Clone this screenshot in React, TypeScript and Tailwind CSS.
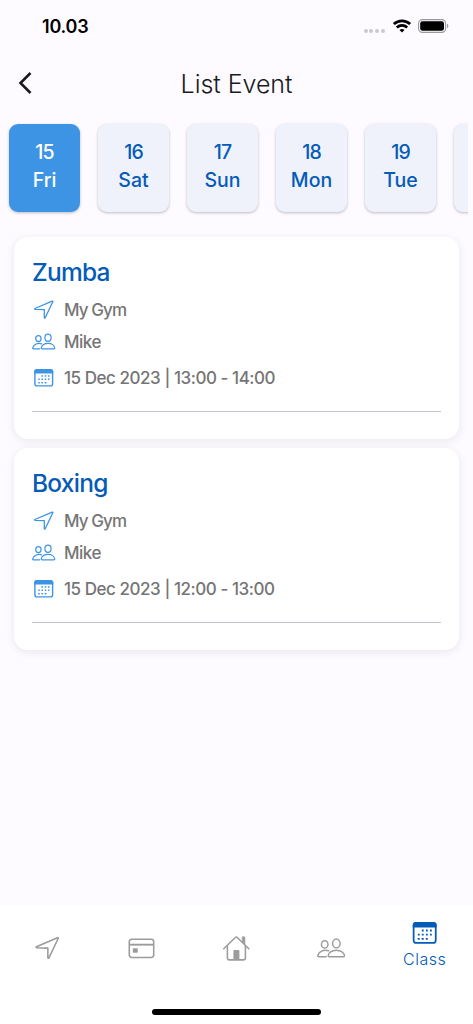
import type { ReactNode } from "react";

type IconProps = { className?: string };

const DAYS = [
  { date: "15", day: "Fri" },
  { date: "16", day: "Sat" },
  { date: "17", day: "Sun" },
  { date: "18", day: "Mon" },
  { date: "19", day: "Tue" },
];

const EVENTS = [
  { title: "Zumba", place: "My Gym", coach: "Mike", time: "15 Dec 2023 | 13:00 - 14:00" },
  { title: "Boxing", place: "My Gym", coach: "Mike", time: "15 Dec 2023 | 12:00 - 13:00" },
];

// col/row positions of the dots inside the calendar icon
const CALENDAR_DOTS = [
  [10.2, 10], [13.5, 10], [16.7, 10],
  [7, 13.3], [10.2, 13.3], [13.5, 13.3], [16.7, 13.3],
  [7, 16.7], [10.2, 16.7], [13.5, 16.7],
];

function LocationIcon({ className }: IconProps) {
  return (
    <svg viewBox="0 0 24 24" className={className} fill="none" stroke="currentColor" strokeWidth="1.3" strokeLinejoin="round">
      <path d="M2.9 10.5 20.2 3.1Q21.1 2.8 20.8 3.7L13.2 19.8Q12.5 20.5 12.3 19.7V11.7L3.1 11.4Q2.1 11 2.9 10.5Z" />
    </svg>
  );
}

function PeopleIcon({ className }: IconProps) {
  return (
    <svg viewBox="0 0 24 24" className={className} fill="none" stroke="currentColor" strokeWidth="1.2" strokeLinecap="round" strokeLinejoin="round">
      <ellipse cx="6.4" cy="8.6" rx="2.7" ry="3" />
      <ellipse cx="16" cy="7.8" rx="3.1" ry="3.6" />
      <path d="M9.6 13.9C5.5 12.6 1.2 14.6.7 18Q.6 18.8 1.5 18.8H7.6" />
      <path d="M16 13.4C12.3 13.4 9.4 15.5 9.2 18Q9.2 18.8 10 18.8H22Q22.8 18.8 22.8 18C22.5 15.5 19.7 13.4 16 13.4Z" />
    </svg>
  );
}

function CalendarIcon({ className }: IconProps) {
  return (
    <svg viewBox="0 0 24 24" className={className} fill="none">
      <rect x="2.9" y="3.9" width="17.7" height="16" rx="2.2" stroke="currentColor" strokeWidth="1.4" />
      <path d="M2.2 7.6V5.6Q2.2 3.1 4.7 3.1H18.8Q21.3 3.1 21.3 5.6V7.6Z" fill="currentColor" />
      {CALENDAR_DOTS.map(([x, y]) => (
        <rect key={`${x}-${y}`} x={x - 0.75} y={y - 0.75} width="1.5" height="1.5" rx="0.2" fill="currentColor" />
      ))}
    </svg>
  );
}

function CardIcon({ className }: IconProps) {
  return (
    <svg viewBox="0 0 28 28" className={className} fill="none" stroke="currentColor" strokeWidth="1.5">
      <rect x="2.2" y="5" width="23.6" height="17.6" rx="2.6" />
      <path d="M2 10.3H26" strokeWidth="1.8" />
      <rect x="5.6" y="13.8" width="4.8" height="4.4" rx="0.8" fill="currentColor" stroke="none" />
    </svg>
  );
}

function HomeIcon({ className }: IconProps) {
  return (
    <svg viewBox="0 0 28 28" className={className} fill="none" stroke="currentColor" strokeWidth="1.5" strokeLinecap="round" strokeLinejoin="round">
      <path d="M1.7 14.3 13.1 3.2Q13.8 2.5 14.5 3.2L25.9 14.3" />
      <path d="M5.2 11.5V23Q5.2 25 7.2 25H20.6Q22.6 25 22.6 23V11.5" />
      <path d="M20 2.8H22V10L20 8Z" fill="currentColor" strokeWidth="0.9" />
      <path d="M11 25V16.4Q11 15.4 12 15.4H15.8Q16.8 15.4 16.8 16.4V25Z" fill="currentColor" stroke="none" />
    </svg>
  );
}

function StatusBar() {
  return (
    <div className="flex h-[52px] items-center justify-between pl-[42px] pr-6 pt-px text-black">
      <span className="text-[18px] font-semibold leading-none tracking-[-0.2px]">10.03</span>
      <div className="flex items-center">
        <div className="mr-2 mt-[8px] flex gap-[1.8px]">
          {[0, 1, 2, 3].map((i) => (
            <span key={i} className="size-1 rounded-full bg-[#cbc9cf]" />
          ))}
        </div>
        <svg viewBox="0 0 18 14" className="-mt-px h-[14px] w-[18px]" fill="none" stroke="currentColor" strokeWidth="2.7">
          <path d="M.9 5.1C5.4.7 12.6.7 17.1 5.1" />
          <path d="M3.8 8.5C6.8 5.7 11.2 5.7 14.2 8.5" />
          <path d="M9 13.6 6.5 11C7.9 9.7 10.1 9.7 11.5 11Z" fill="currentColor" stroke="none" />
        </svg>
        <svg viewBox="0 0 31 14" className="-mt-px ml-[7px] h-[14px] w-[31px]">
          <rect x="0.6" y="0.6" width="27" height="12.8" rx="3.8" fill="none" stroke="#9b999e" strokeWidth="1.1" />
          <rect x="2.2" y="2.2" width="23.8" height="9.6" rx="2.3" fill="currentColor" />
          <path d="M29 4.8Q30.4 5.4 30.4 7T29 9.2Z" fill="#9b999e" />
        </svg>
      </div>
    </div>
  );
}

function DayCard({ date, day, active }: { date: string; day: string; active: boolean }) {
  return (
    <div
      className={`flex h-[88px] w-[71px] shrink-0 flex-col items-center rounded-[9px] pt-3.5 text-[19.5px] font-medium leading-7 shadow-[0_1px_3px_rgba(0,0,0,0.25)] ${
        active ? "bg-[#3e94e4] text-white" : "bg-[#eff2fb] text-[#055bb8]"
      }`}
    >
      <span className="tracking-[-0.9px]">{date}</span>
      <span>{day}</span>
    </div>
  );
}

function Row({ icon, className, children }: { icon: ReactNode; className: string; children: ReactNode }) {
  return (
    <div className={`flex items-center gap-2 ${className}`}>
      <span className="text-[#3e94e4]">{icon}</span>
      <span className="whitespace-pre pt-[2px] text-[17px] font-medium text-[#757575]">{children}</span>
    </div>
  );
}

function EventCard({ title, place, coach, time }: (typeof EVENTS)[number]) {
  return (
    <article className="h-[202px] rounded-[14px] bg-white px-[18px] pt-[19px] shadow-[0_2px_9px_rgba(60,50,80,0.1)]">
      <h2 className="mb-1.5 text-[24.5px] font-medium leading-8 tracking-[-0.75px] text-[#055bb8]">{title}</h2>
      <Row icon={<LocationIcon className="size-6" />} className="h-8 tracking-[-0.9px]">{place}</Row>
      <Row icon={<PeopleIcon className="size-6" />} className="h-8 tracking-[-0.5px]">{coach}</Row>
      <Row icon={<CalendarIcon className="size-6" />} className="h-10 tracking-[-0.45px]">{time}</Row>
      <div className="mt-[13px] h-px bg-[#c3c3d2]" />
    </article>
  );
}

function BottomNav() {
  return (
    <nav className="flex h-[119px] flex-col justify-between bg-white pb-[9px] text-[#9c9c9c]">
      <div className="grid h-[86px] grid-cols-5 items-center justify-items-center">
        <LocationIcon className="size-[29px]" />
        <CardIcon className="size-[29px]" />
        <HomeIcon className="size-[29px]" />
        <PeopleIcon className="size-[29px]" />
        <div className="-mt-[7px] mr-0.5 flex flex-col items-center text-[#055bb8]">
          <CalendarIcon className="size-[30px]" />
          <span className="-mt-px text-base font-light leading-6 tracking-[0.5px]">Class</span>
        </div>
      </div>
      <div className="h-1.5 w-[169px] self-center rounded-full bg-black" />
    </nav>
  );
}

export default function App() {
  return (
    <div className="flex h-screen w-full flex-col overflow-hidden bg-[#fdfbff] font-['Inter',sans-serif]">
      <StatusBar />
      <header className="grid h-16 grid-cols-[1fr_auto_1fr] items-center px-[17px]">
        <svg viewBox="0 0 16 24" className="mb-[3px] h-6 w-4" fill="none" stroke="#191a1e" strokeWidth="2.6">
          <path d="M13.5 2 3.5 12 13.5 22" />
        </svg>
        <h1 className="pt-0.5 text-[25px] font-light tracking-[-0.05px] text-[#191a1e]">List Event</h1>
      </header>

      <div className="mr-[5px] flex h-[108px] shrink-0 gap-[18px] overflow-hidden pl-[9px] pt-2">
        {DAYS.map((d, i) => (
          <DayCard key={d.date} {...d} active={i === 0} />
        ))}
        {/* edge of the next day, cut off by the scroller */}
        <div className="h-[88px] w-[71px] shrink-0 rounded-[9px] bg-[#eff2fb] shadow-[0_1px_3px_rgba(0,0,0,0.25)]" />
      </div>

      <main className="flex flex-1 flex-col gap-[9px] px-3.5 pt-[13px]">
        {EVENTS.map((e) => (
          <EventCard key={e.title} {...e} />
        ))}
      </main>

      <BottomNav />
    </div>
  );
}
